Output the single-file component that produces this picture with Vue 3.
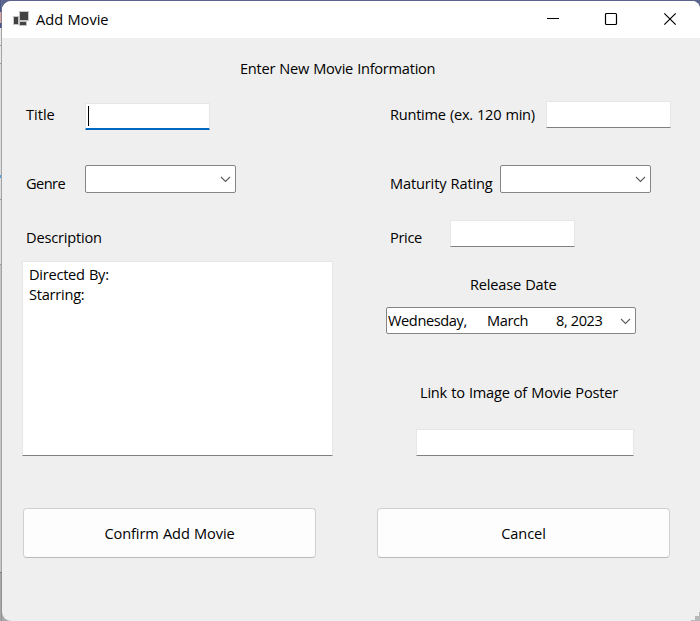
<script setup>
import { ref } from 'vue'

const title = ref('')
const description = ref(['Directed By:', 'Starring:'])
</script>

<template>
  <div class="desktop">
    <div class="backdrop">
      <i class="b1"></i><i class="b2"></i><i class="b3"></i><i class="b4"></i><i class="b5"></i><i class="b6"></i><i class="b7"></i><i class="b8"></i><i class="b9"></i><i class="b10"></i><i class="b11"></i><i class="b12"></i>
    </div>
    <main class="window">
      <header class="titlebar">
        <svg class="app-icon" width="18" height="16" viewBox="0 0 18 16">
          <path fill="#c4c4c4" d="M6 0h10v10h-2v5H6v-1H0V5h6z" />
          <path fill="#424242" d="M7 1h8v8H7zM1 6h4v7H1zM7 11h6v3H7z" />
        </svg>
        <span class="caption">Add Movie</span>
        <svg class="controls" width="132" height="14" viewBox="0 0 132 14" fill="none" stroke="#000">
          <path d="M1 6.5h12" />
          <rect x="59.5" y="1.5" width="11" height="11" rx="1" stroke-width="1.2" />
          <path d="M118.3 1.3l11.4 11.4M129.7 1.3l-11.4 11.4" stroke-width="1.2" />
        </svg>
      </header>

      <h1>Enter New Movie Information</h1>

      <form class="columns" @submit.prevent>
        <section class="left">
          <div class="row title-row">
            <label>Title</label>
            <div class="box focused">{{ title }}<i class="caret"></i></div>
          </div>
          <div class="row genre-row">
            <label>Genre</label>
            <div class="select">
              <svg class="chevron" width="11" height="7" viewBox="0 0 11 7"><path d="M1 1l4.5 4.5L10 1" /></svg>
            </div>
          </div>
          <label class="desc-label">Description</label>
          <div class="box memo">
            <div v-for="line in description" :key="line">{{ line }}</div>
          </div>
          <button type="submit" class="confirm">Confirm Add Movie</button>
        </section>

        <section class="right">
          <div class="row runtime-row">
            <label>Runtime (ex. 120 min)</label>
            <div class="box"></div>
          </div>
          <div class="row rating-row">
            <label>Maturity Rating</label>
            <div class="select">
              <svg class="chevron" width="11" height="7" viewBox="0 0 11 7"><path d="M1 1l4.5 4.5L10 1" /></svg>
            </div>
          </div>
          <div class="row price-row">
            <label>Price</label>
            <div class="box"></div>
          </div>
          <label class="date-label">Release Date</label>
          <div class="select date">
            <span class="weekday">Wednesday,</span>
            <span class="month">March</span>
            <span class="day">8, 2023</span>
            <svg class="chevron" width="11" height="7" viewBox="0 0 11 7"><path d="M1 1l4.5 4.5L10 1" /></svg>
          </div>
          <label class="link-label">Link to Image of Movie Poster</label>
          <div class="box link"></div>
          <button type="button" class="cancel">Cancel</button>
        </section>
      </form>
      <svg class="grip" width="9" height="9" viewBox="0 0 9 9" shape-rendering="crispEdges">
        <path fill="#b8b8b8" d="M8 0h1v9H0V8h4V4h4z" />
      </svg>
    </main>
  </div>
</template>

<style>
body { margin: 0; overflow: hidden; }
</style>

<style scoped>
* { box-sizing: border-box; }
.desktop {
  width: 700px;
  height: 621px;
  display: flex;
  background: linear-gradient(#5a648c 0 30px, #aaa 30px);
  font: 14.6px/20px "Open Sans", "Noto Sans", sans-serif;
  letter-spacing: -0.25px;
  word-spacing: 0.6px;
  color: #000;
  overflow: hidden;
}
.backdrop { width: 2px; display: flex; flex-direction: column; }
.backdrop i { display: block; border-right: 1px solid #a3a3a3; background: #dedede; }
.b1 { height: 12px; }
.b2 { height: 11px; }
.b3 { height: 5px; }
.b4 { height: 18px; }
.b5 { height: 18px; }
.b6 { height: 20px; }
.b7 { height: 91px; }
.b8 { height: 3px; }
.b9 { height: 22px; }
.b10 { height: 65px; }
.b11 { height: 307px; }
.b12 { height: 49px; }
.backdrop .b1, .backdrop .b3 { background: #4a5689; border-color: #66708f; }
.backdrop .b2 { background: #d6a79c; border-color: #8d849a; }
.backdrop .b4, .backdrop .b5 { background: #e9e9e9; border-bottom: 1px solid #999; }
.backdrop .b8 { background: #4ba3dc; }
.backdrop .b9, .backdrop .b10 { border-bottom: 1px solid #999; }
.backdrop .b11 { background: #c6c6c6; }
.backdrop .b12 { background: #a8a8a8; border-top: 1px solid #777; border-right-color: #929292; }
.window {
  position: relative;
  width: 698px;
  height: 620px;
  margin-top: 1px;
  background: #efefef;
  border-radius: 9px 8px 0 9px;
  overflow: hidden;
}
.titlebar {
  height: 37px;
  display: flex;
  align-items: center;
  padding: 0 22px 2px 11px;
  background: #fff;
}
.app-icon { margin-top: 1px; }
.caption { margin-left: 5px; letter-spacing: 0; }
.controls { margin-left: auto; }
h1 { margin: 20px 0 0 238px; height: 21px; font: inherit; }
span, label { white-space: nowrap; }
.columns { display: flex; }
section { display: flex; flex-direction: column; align-items: flex-start; }
.left { width: 375px; padding-left: 20px; }
.row { display: flex; align-items: flex-start; }
.row label { flex: none; }
.box {
  width: 125px;
  height: 27px;
  background: #fff;
  border: 1px solid #e6e6e6;
  border-bottom-color: #808080;
  border-radius: 1px;
}
.box.focused { border-bottom: 2px solid #0067c0; padding: 2px 0 0 2px; }
.caret { display: block; width: 1px; height: 20px; background: #000; }
.select {
  width: 151px;
  height: 28px;
  display: flex;
  align-items: center;
  background: #fff;
  border: 1px solid #858585;
  border-radius: 2px;
}
.chevron { margin: 1px 4px 0 auto; fill: none; stroke: #5c5c5c; stroke-width: 1.1; }
.title-row { margin-top: 24px; padding-left: 4px; }
.title-row label { width: 59px; padding-top: 1px; letter-spacing: 0; }
.genre-row { margin-top: 35px; padding-left: 4px; }
.genre-row label { width: 59px; padding-top: 8px; letter-spacing: -0.55px; }
.desc-label { margin: 34px 0 0 4px; letter-spacing: -0.2px; }
.memo { width: 311px; height: 195px; margin-top: 14px; padding: 2px 6px; }
button {
  width: 293px;
  height: 50px;
  padding: 0;
  font: inherit;
  letter-spacing: -0.1px;
  word-spacing: inherit;
  color: #000;
  background: #fdfdfd;
  border: 1px solid #d0d0d0;
  border-bottom-color: #bababa;
  border-radius: 4px;
}
.confirm { margin: 52px 0 0 1px; }
.runtime-row { margin-top: 22px; padding-left: 13px; }
.runtime-row label { width: 156px; padding-top: 3px; }
.rating-row { margin-top: 37px; padding-left: 13px; }
.rating-row label { width: 110px; padding-top: 8px; letter-spacing: -0.15px; }
.price-row { margin-top: 27px; padding-left: 13px; }
.price-row label { width: 60px; padding-top: 7px; letter-spacing: -0.35px; }
.date-label { margin: 27px 0 0 93px; letter-spacing: -0.2px; }
.date { width: 250px; height: 27px; margin: 13px 0 0 9px; padding-left: 1px; letter-spacing: -0.4px; word-spacing: 0; }
.date span { margin-bottom: 2px; }
.weekday { width: 99px; }
.month { width: 69px; }
.link-label { margin: 48px 0 0 43px; letter-spacing: -0.22px; }
.link { width: 218px; margin-top: 27px; margin-left: 39px; }
.cancel { margin-top: 52px; }
.grip { position: absolute; right: 0; bottom: 0; }
</style>
